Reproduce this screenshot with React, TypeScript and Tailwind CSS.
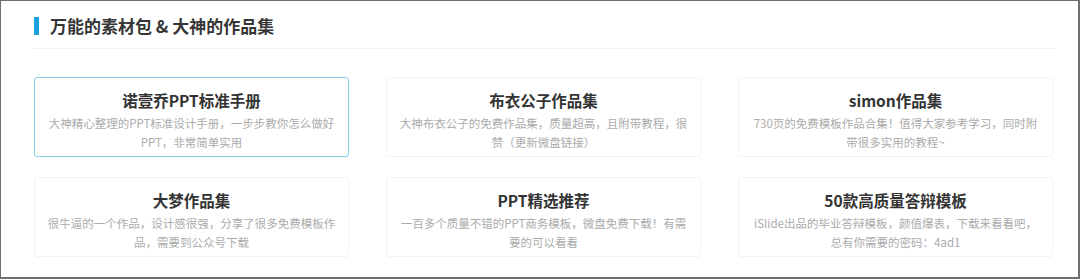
import React from "react";

const works = [
    {
        title: "诺壹乔PPT标准手册",
        desc: "大神精心整理的PPT标准设计手册，一步步教你怎么做好PPT，非常简单实用",
        active: true,
    },
    {
        title: "布衣公子作品集",
        desc: "大神布衣公子的免费作品集，质量超高，且附带教程，很赞（更新微盘链接）",
    },
    {
        title: "simon作品集",
        desc: "730页的免费模板作品合集！值得大家参考学习，同时附带很多实用的教程~",
    },
    {
        title: "大梦作品集",
        desc: "很牛逼的一个作品，设计感很强，分享了很多免费模板作品，需要到公众号下载",
    },
    {
        title: "PPT精选推荐",
        desc: "一百多个质量不错的PPT商务模板，微盘免费下载！有需要的可以看看",
    },
    {
        title: "50款高质量答辩模板",
        desc: "iSlide出品的毕业答辩模板，颜值爆表，下载来看看吧，总有你需要的密码：4ad1",
    },
];

const WorkCard = ({
    title,
    desc,
    active,
}: {
    title: string;
    desc: string;
    active?: boolean;
}) => {
    return (
        <div
            className={
                active
                    ? "h-[80px] rounded-[3px] border-[1.5px] border-[#82cdea] bg-white pt-[11px] text-center"
                    : "h-[80px] rounded-[3px] border border-[#f3f3f3] bg-white pt-[11px] text-center"
            }
        >
            <div className="text-[15.5px] font-bold leading-[22px] text-[#333]">
                {title}
            </div>
            <p className="mx-auto mt-[3px] w-[290px] text-[11.5px] leading-[18.5px] text-[#ababab]">
                {desc}
            </p>
        </div>
    );
};

export default function App() {
    return (
        <div
            className="h-[279px] w-[1080px] border-t border-l border-r-2 border-b-2 border-[#6f6f6f] bg-white"
            style={{ fontFamily: '"Noto Sans CJK SC", "Noto Sans", sans-serif' }}
        >
            <div className="pl-[33px] pr-[22px]">
                {/* section header */}
                <div className="flex items-center gap-[11px] border-b border-[#f0f0f0] pt-[16px] pb-[13px]">
                    <span className="h-[18px] w-[5px] bg-[#1aa0e0]" />
                    <h2 className="text-[17px] font-bold leading-[18px] text-[#363636]">
                        万能的素材包 &amp; 大神的作品集
                    </h2>
                </div>
                <div className="mt-[28px] grid w-[1019px] grid-cols-3 gap-x-[37px] gap-y-[20px]">
                    {works.map((w) => (
                        <WorkCard key={w.title} {...w} />
                    ))}
                </div>
            </div>
        </div>
    );
}
